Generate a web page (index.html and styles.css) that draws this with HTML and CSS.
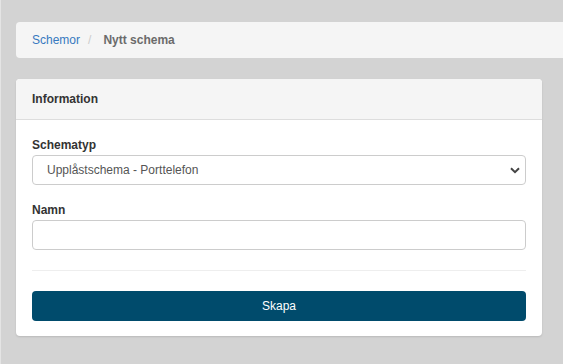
FILE: index.html
```html
<!DOCTYPE html>
<html lang="sv">

<head>
	<meta charset="UTF-8">
	<meta name="viewport" content="width=device-width, initial-scale=1.0">
	<title>Nytt schema</title>
	<link rel="stylesheet" href="styles.css">
</head>

<body>

	<div class="page">
		<div class="breadcrumb">
			<a href="#">Schemor</a>
			<span class="sep">/</span>
			<span class="active">Nytt schema</span>
		</div>

		<div class="card">
			<div class="card-header">Information</div>
			<form class="card-body" id="schemaForm">
				<div class="form-group">
					<label for="schematyp">Schematyp</label>
					<div class="select-wrap">
						<select id="schematyp" name="schematyp">
							<option value="porttelefon">Upplåstschema - Porttelefon</option>
						</select>
						<svg class="chevron" width="10" height="7" viewBox="0 0 10 7">
							<path d="M1 1.2 L5 5.2 L9 1.2" fill="none" stroke="#444" stroke-width="2"/>
						</svg>
					</div>
				</div>

				<div class="form-group">
					<label for="namn">Namn</label>
					<input type="text" id="namn" name="namn">
				</div>

				<hr>

				<button type="submit">Skapa</button>
			</form>
		</div>
	</div>

</body>

</html>
```

FILE: styles.css
```css
html,
body {
	margin: 0;
	height: 100%;
}

body {
	font-family: "Liberation Sans", Arial, sans-serif;
	font-size: 12px;
	line-height: 17px;
	color: #333;
	background-color: #d3d3d3;
	border-left: 1px solid #e4e4e4;
	box-sizing: border-box;
	overflow: hidden;
}

.page {
	padding: 22px 21px 0 15px;
}

.breadcrumb {
	display: flex;
	align-items: center;
	height: 36px;
	box-sizing: border-box;
	padding: 1px 16px 0;
	margin-right: -30px;
	background-color: #f5f5f5;
	border-radius: 4px;
}

.breadcrumb a {
	color: #3779c0;
	text-decoration: none;
}

.breadcrumb .sep {
	color: #ccc;
	margin: 0 12px 0 8px;
}

.breadcrumb .active {
	color: #6b6b6b;
	font-weight: bold;
}

.card {
	margin-top: 21px;
	background-color: #fff;
	border-radius: 4px;
	box-shadow: 0 1px 2px rgba(0, 0, 0, 0.12);
	overflow: hidden;
}

.card-header {
	height: 41px;
	box-sizing: border-box;
	padding: 12px 16px 0;
	background-color: #f5f5f5;
	border-bottom: 1px solid #ddd;
	font-weight: bold;
}

.card-body {
	display: flex;
	flex-direction: column;
	padding: 15px 16px 15px;
}

.form-group {
	display: flex;
	flex-direction: column;
	margin-bottom: 15px;
}

label {
	font-weight: bold;
	margin: 2px 0 1px;
}

.select-wrap {
	position: relative;
}

select,
input[type="text"] {
	width: 100%;
	height: 30px;
	box-sizing: border-box;
	margin: 0;
	border: 1px solid #ccc;
	border-radius: 4px;
	background-color: #fff;
	font-family: inherit;
	font-size: 12px;
	color: #555;
	outline: none;
}

select {
	appearance: none;
	padding: 0 30px 0 14px;
}

input[type="text"] {
	padding: 0 12px;
}

.chevron {
	position: absolute;
	right: 6px;
	top: 12px;
	pointer-events: none;
}

hr {
	width: 100%;
	margin: 5px 0 20px;
	border: none;
	border-top: 1px solid #eee;
}

button {
	height: 30px;
	padding: 0;
	background-color: #004b6c;
	color: #fff;
	border: none;
	border-radius: 4px;
	font-family: inherit;
	font-size: 12px;
	cursor: pointer;
}
```
